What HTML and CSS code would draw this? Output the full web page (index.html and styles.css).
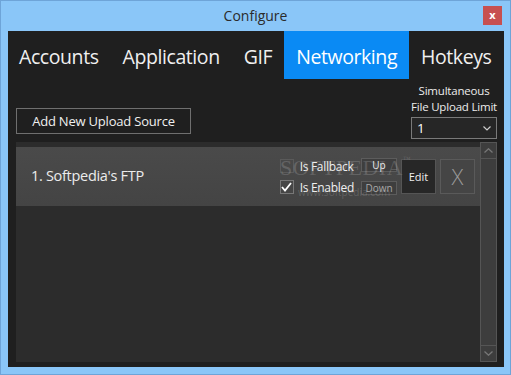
FILE: index.html
```html
<!DOCTYPE html>
<html lang="en">
<head>
    <meta charset="UTF-8">
    <title>Configure</title>
    <link rel="stylesheet" href="styles.css">
</head>
<body>
    <div class="window">
        <div class="titlebar">
            <span class="title">Configure</span>
            <span class="close">x</span>
        </div>

        <div class="content">
            <div class="tabs">
                <div class="tab first">Accounts</div>
                <div class="tab">Application</div>
                <div class="tab">GIF</div>
                <div class="tab active">Networking</div>
                <div class="tab">Hotkeys</div>
            </div>

            <div class="toolbar">
                <div class="add-btn">Add New Upload Source</div>
                <div class="limit">
                    <div class="limit-label">Simultaneous<br>File Upload Limit</div>
                    <div class="select">
                        <span>1</span>
                        <svg width="8" height="5" viewBox="0 0 8 5"><path d="M0.5 0.5 L4 4 L7.5 0.5" fill="none" stroke="#ccc" stroke-width="1.2"/></svg>
                    </div>
                </div>
            </div>

            <div class="list">
                <div class="items">
                    <div class="item">
                        <div class="item-name">1. Softpedia's FTP</div>
                        <div class="item-controls">
                            <div class="checks">
                                <label class="check"><span class="box"></span>Is Fallback</label>
                                <label class="check"><span class="box checked">
                                    <svg width="11" height="10" viewBox="0 0 11 10"><path d="M1 5 L4 8.5 L10 1" fill="none" stroke="#fff" stroke-width="1.8"/></svg>
                                </span>Is Enabled</label>
                            </div>
                            <div class="moves">
                                <div class="small-btn">Up</div>
                                <div class="small-btn dim">Down</div>
                            </div>
                            <div class="edit-btn">Edit</div>
                            <div class="del-btn">X</div>
                        </div>
                        <div class="watermark">SOFTPEDIA<sup>™</sup><small>www.softpedia.com</small></div>
                    </div>
                </div>
                <div class="scrollbar">
                    <div class="arrow">
                        <svg width="9" height="5" viewBox="0 0 9 5"><path d="M0.5 4.5 L4.5 0.8 L8.5 4.5" fill="none" stroke="#777" stroke-width="1.3"/></svg>
                    </div>
                    <div class="track"></div>
                    <div class="arrow">
                        <svg width="9" height="5" viewBox="0 0 9 5"><path d="M0.5 0.5 L4.5 4.2 L8.5 0.5" fill="none" stroke="#777" stroke-width="1.3"/></svg>
                    </div>
                </div>
            </div>
        </div>
    </div>
</body>
</html>
```

FILE: styles.css
```css
body {
    margin: 0;
    font-family: 'Open Sans', 'Noto Sans', sans-serif;
    background: #8ac6f8;
}
.window {
    width: 511px;
    height: 375px;
    box-sizing: border-box;
    border: 1px solid #6ea4d8;
    background: #8ac6f8;
    display: flex;
    flex-direction: column;
}
.titlebar {
    height: 30px;
    display: flex;
    align-items: center;
    justify-content: center;
    position: relative;
}
.title {
    font-size: 14px;
    color: #2b2b2b;
    margin-top: -1px;
}
.close {
    position: absolute;
    right: 8px;
    top: 5px;
    width: 19px;
    height: 19px;
    background: #c75050;
    color: #fff;
    font-size: 11px;
    font-weight: bold;
    line-height: 17px;
    text-align: center;
}
.content {
    flex: 1;
    margin: 0 6px 7px 7px;
    background: #1f1f1f;
    display: flex;
    flex-direction: column;
    padding: 0 7px 5px 8px;
}
.tabs {
    display: flex;
    height: 48px;
    margin-left: -8px;
}
.tab {
    padding: 0 12px;
    color: #f0f0f0;
    font-size: 19.5px;
    line-height: 52px;
    height: 48px;
    letter-spacing: -0.42px;
}
.tab.first {
    padding-left: 11px;
}
.tab.active {
    background: #0a8af4;
    color: #fff;
}
.toolbar {
    height: 63px;
    display: flex;
    justify-content: space-between;
    align-items: flex-end;
    padding-bottom: 3px;
    box-sizing: border-box;
}
.add-btn {
    border: 1px solid #6f6f6f;
    color: #f0f0f0;
    font-size: 13px;
    height: 26px;
    line-height: 24px;
    width: 175px;
    box-sizing: border-box;
    text-align: center;
    white-space: nowrap;
    letter-spacing: -0.2px;
    margin-bottom: 5px;
}
.limit {
    display: flex;
    flex-direction: column;
    align-items: center;
}
.limit-label {
    color: #ececec;
    font-size: 11.5px;
    line-height: 16px;
    text-align: center;
    margin-bottom: 2px;
    letter-spacing: -0.2px;
}
.select {
    height: 20px;
    border: 1px solid #7a7a7a;
    background: #262626;
    display: flex;
    justify-content: space-between;
    align-items: center;
    padding: 0 5px 0 5px;
    color: #fff;
    font-size: 13.5px;
    width: 74px;
}
.list {
    flex: 1;
    display: flex;
    background: #2c2c2c;
}
.items {
    flex: 1;
    padding-top: 5px;
}
.item {
    height: 59px;
    background: linear-gradient(#4a4a4a, #444);
    display: flex;
    align-items: center;
    justify-content: space-between;
    position: relative;
}
.item-name {
    color: #ececec;
    font-size: 14.5px;
    padding-left: 15px;
    margin-top: -2px;
    letter-spacing: -0.3px;
}
.item-controls {
    display: flex;
    align-items: center;
    gap: 4px;
    padding-right: 5px;
}
.checks {
    display: flex;
    flex-direction: column;
    gap: 5px;
    margin-right: 3px;
}
.check {
    display: flex;
    align-items: center;
    color: #f0f0f0;
    font-size: 12px;
    height: 16px;
    letter-spacing: -0.3px;
}
.box {
    width: 14px;
    height: 14px;
    border: 1px solid #5a5a5a;
    box-sizing: border-box;
    margin-right: 6px;
    display: flex;
    align-items: center;
    justify-content: center;
}
.box.checked {
    border-color: #777;
}
.moves {
    display: flex;
    flex-direction: column;
    gap: 9px;
}
.small-btn {
    width: 34px;
    height: 12px;
    border: 1px solid #5c5c5c;
    background: #3e3e3e;
    color: #f0f0f0;
    font-size: 10px;
    line-height: 12px;
    text-align: center;
}
.small-btn.dim {
    color: #a8a8a8;
}
.edit-btn {
    width: 33px;
    height: 33px;
    border: 1px solid #555;
    background: #272727;
    color: #f0f0f0;
    font-size: 11px;
    line-height: 33px;
    text-align: center;
}
.del-btn {
    width: 33px;
    height: 33px;
    border: 1px solid #5a5a5a;
    background: #454545;
    color: #9a9a9a;
    font-size: 22px;
    font-weight: 300;
    line-height: 33px;
    text-align: center;
}
.watermark {
    position: absolute;
    left: 264px;
    top: 8px;
    font-family: 'Liberation Serif', serif;
    font-size: 22px;
    letter-spacing: 0.5px;
    color: rgba(200, 200, 200, 0.22);
    pointer-events: none;
}
.watermark sup {
    font-size: 8px;
    vertical-align: top;
}
.watermark small {
    position: absolute;
    left: 18px;
    top: 30px;
    font-family: 'Open Sans', sans-serif;
    font-size: 10px;
    letter-spacing: 0;
    white-space: nowrap;
}
.scrollbar {
    width: 15px;
    border: 1px solid #555;
    background: #3d3d3d;
    display: flex;
    flex-direction: column;
}
.arrow {
    height: 15px;
    display: flex;
    align-items: center;
    justify-content: center;
}
.arrow:first-child {
    border-bottom: 1px solid #555;
}
.arrow:last-child {
    border-top: 1px solid #555;
}
.track {
    flex: 1;
}
```
